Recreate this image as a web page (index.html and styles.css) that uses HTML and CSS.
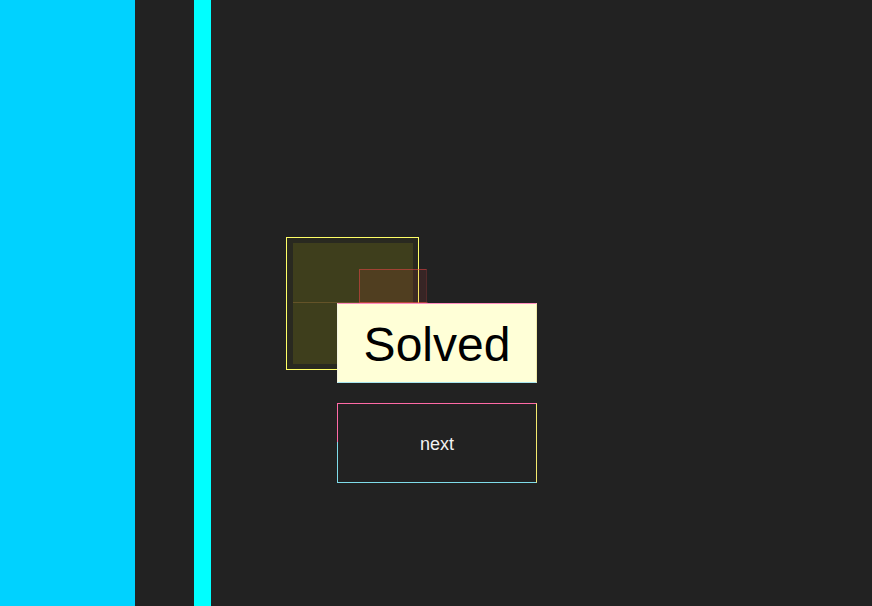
FILE: index.html
```html
<!DOCTYPE html>
<html>
<head>
<meta charset="utf-8">
<link rel="stylesheet" href="styles.css">
</head>
<body>
<div class="page">
  <div class="bar-left"></div>
  <div class="bar-gap"></div>
  <div class="bar-thin"></div>
  <div class="main">
    <div class="stage">
      <div class="target">
        <div class="target-inner"></div>
        <div class="target-line"></div>
      </div>
      <div class="marker"></div>
      <div class="solved">Solved</div>
      <div class="next"><span class="next-edge"></span>next</div>
    </div>
  </div>
</div>
</body>
</html>
```

FILE: styles.css
```css
html, body {
  margin: 0;
  padding: 0;
  background: #222222;
}
.page {
  display: flex;
  width: 872px;
  height: 606px;
  overflow: hidden;
  font-family: "Liberation Sans", Arial, sans-serif;
}
.bar-left {
  width: 135px;
  flex: none;
  background: #00d2ff;
}
.bar-gap {
  width: 59px;
  flex: none;
}
.bar-thin {
  width: 17px;
  flex: none;
  background: #00ffff;
}
.main {
  flex: 1;
  padding: 303px 0 0 126px;
}
.stage {
  position: relative;
  display: flex;
  flex-direction: column;
  gap: 20px;
  width: 200px;
}
.target {
  position: absolute;
  left: -51px;
  top: -66px;
  width: 133px;
  height: 133px;
  border: 1px solid #ffff66;
  background: rgba(255, 255, 0, 0.035);
  box-sizing: border-box;
}
.target-inner {
  position: absolute;
  left: 6px;
  top: 5px;
  right: 5px;
  bottom: 5px;
  background: rgba(255, 255, 0, 0.1);
}
.target-line {
  position: absolute;
  left: 6px;
  right: -10px;
  top: 64px;
  height: 1px;
  background: rgba(255, 170, 90, 0.2);
}
.marker {
  position: absolute;
  left: 22px;
  top: -34px;
  width: 68px;
  height: 34px;
  border: 1px solid rgba(240, 70, 70, 0.5);
  border-right-color: rgba(240, 70, 70, 0.15);
  background: rgba(200, 60, 60, 0.13);
  box-sizing: border-box;
}
.solved {
  position: relative;
  z-index: 2;
  box-sizing: border-box;
  width: 200px;
  height: 80px;
  display: flex;
  align-items: center;
  justify-content: center;
  background: #ffffd7;
  border-top: 1px solid #ff8cc0;
  border-right: 1px solid #f0eaa8;
  border-bottom: 1px solid #a8e6f0;
  border-left: 1px solid #f4f4e0;
  color: #000000;
  font-size: 48px;
  padding-top: 2px;
}
.next {
  position: relative;
  z-index: 2;
  box-sizing: border-box;
  width: 200px;
  height: 80px;
  display: flex;
  align-items: center;
  justify-content: center;
  padding-top: 2px;
  font-size: 18px;
  color: #f2f2f2;
  background: #222222;
  border-top: 1px solid #ff6aa6;
  border-right: 1px solid #f5ea6e;
  border-bottom: 1px solid #7fdcea;
  border-left: 1px solid #7fdcea;
}
.next-edge {
  position: absolute;
  left: -1px;
  top: -1px;
  width: 1px;
  height: 50%;
  background: #ff6aa6;
}
```
